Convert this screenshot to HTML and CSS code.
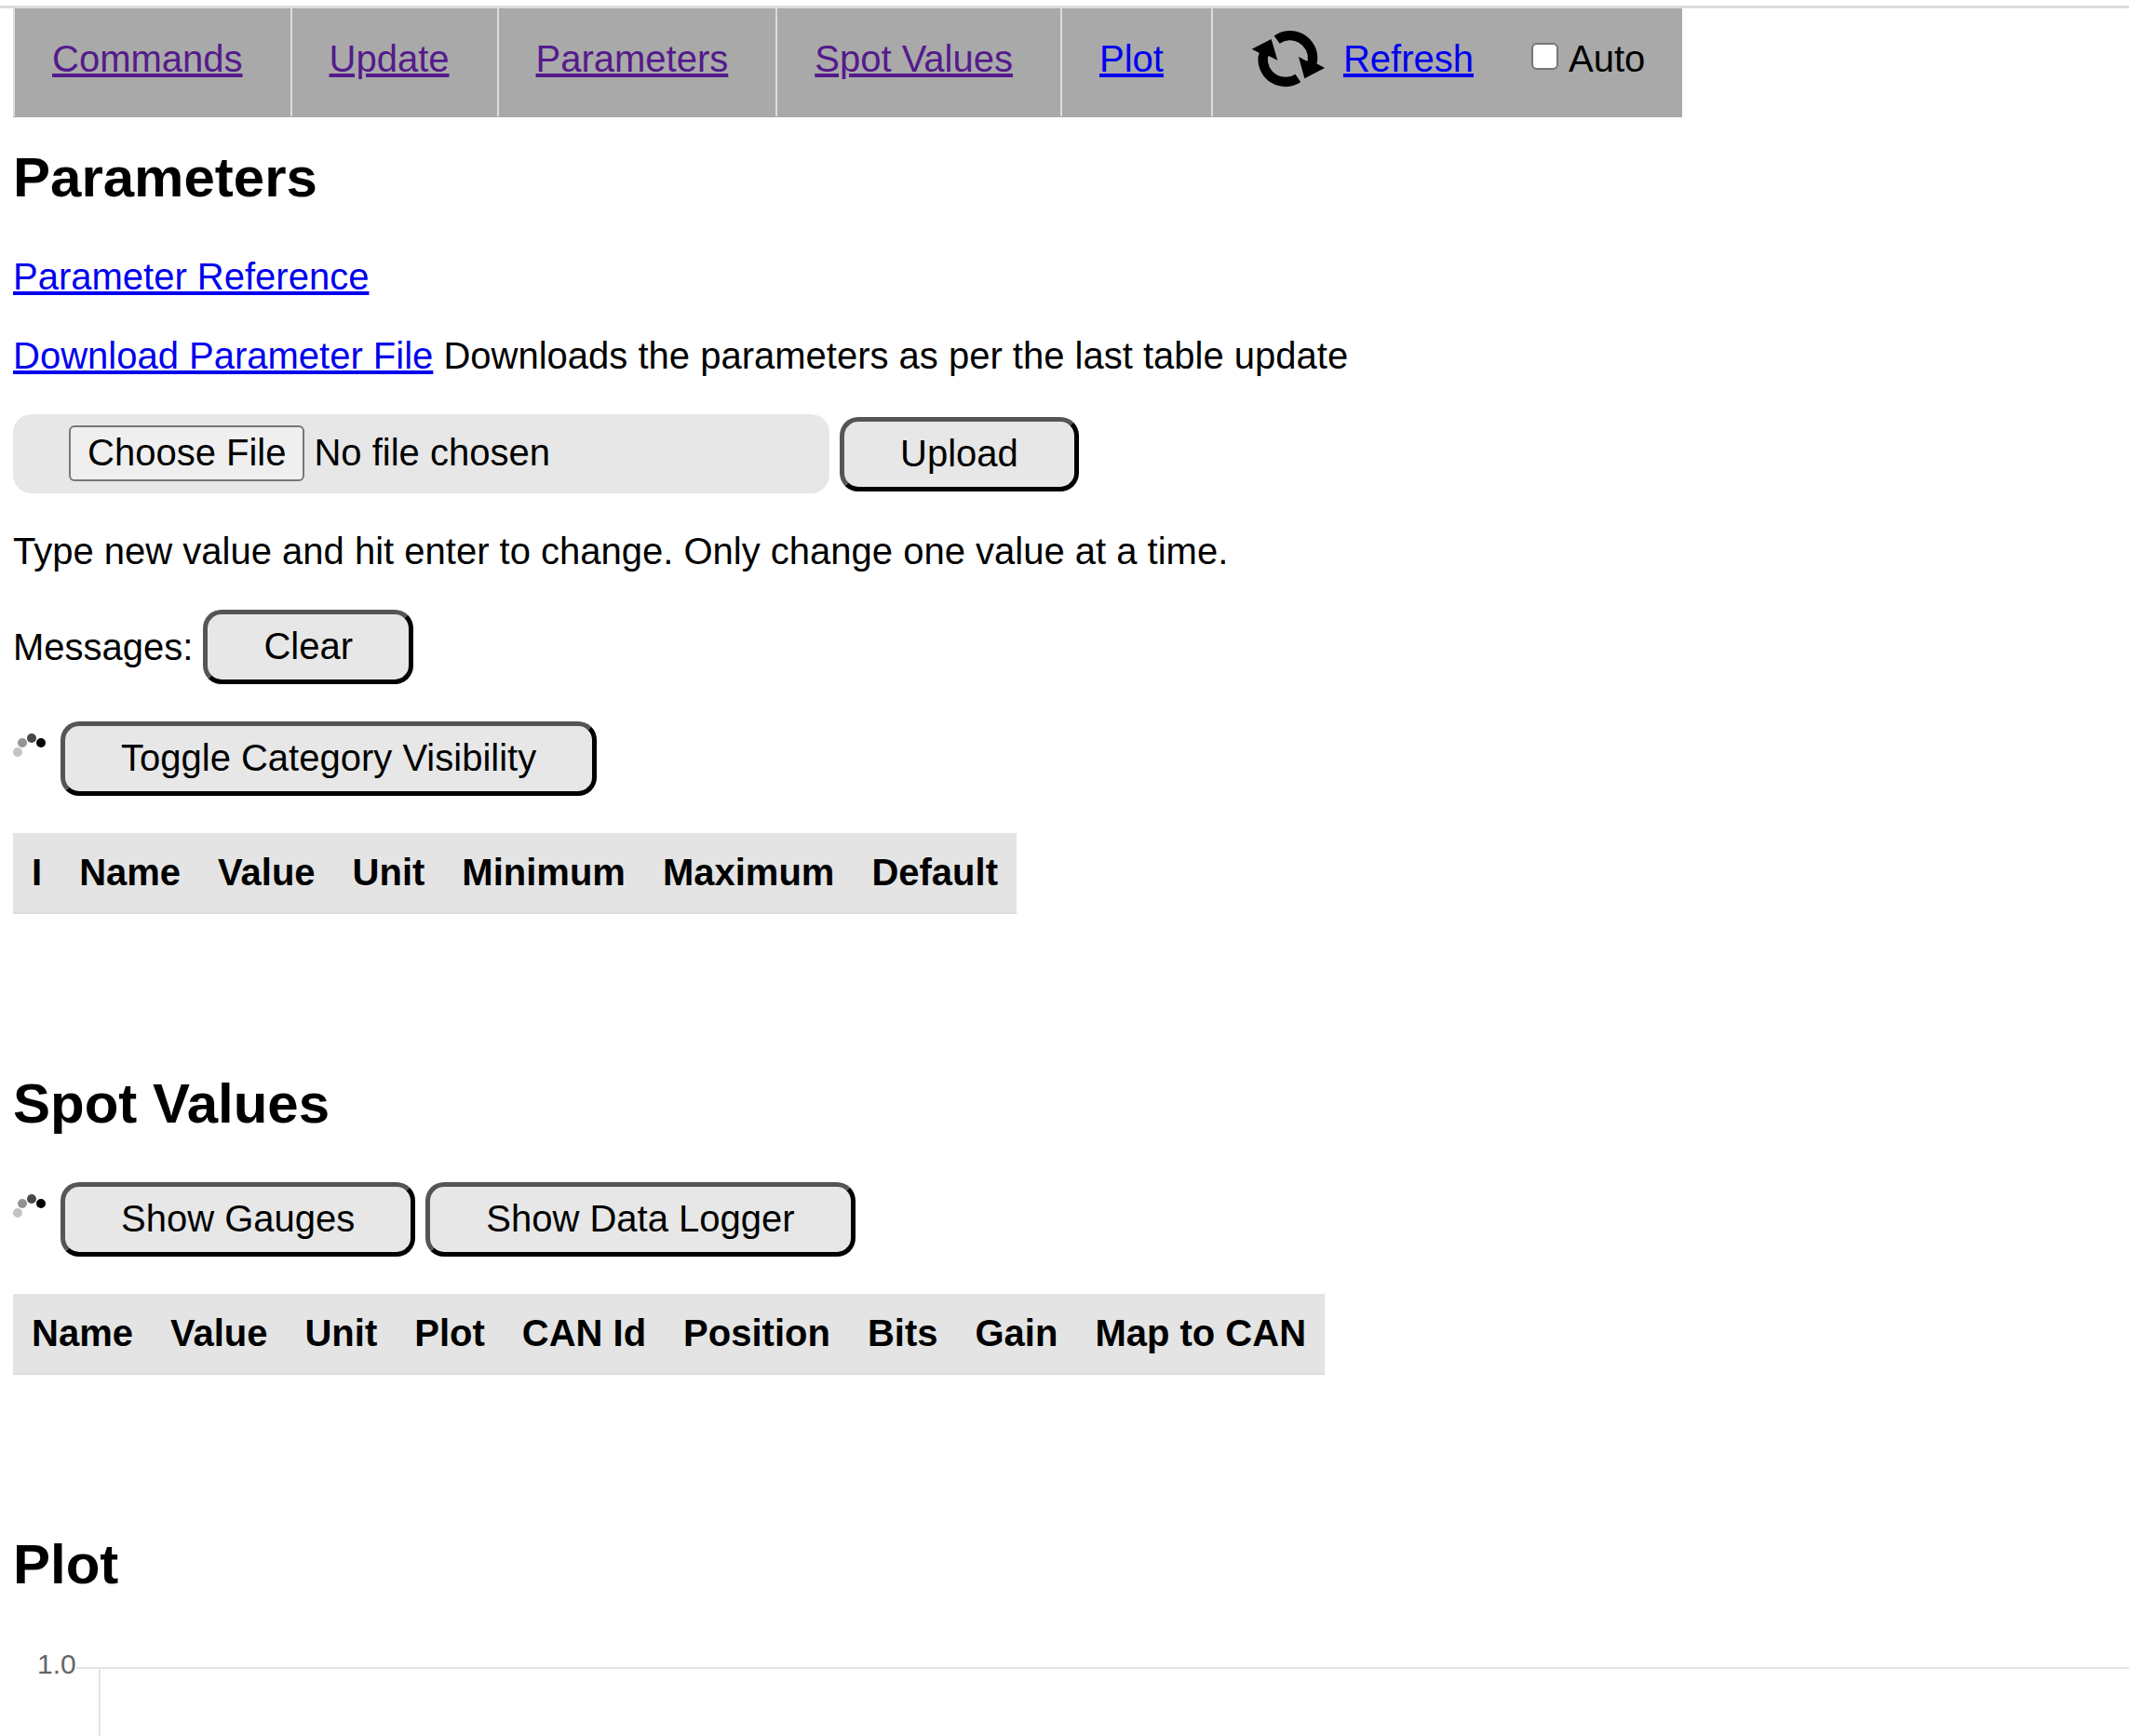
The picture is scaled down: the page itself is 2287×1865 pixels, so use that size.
FILE: index.html
```html
<!DOCTYPE html>
<html lang="en">
<head>
  <meta charset="UTF-8">
  <meta name="viewport" content="width=device-width, initial-scale=1.0">
  <title>Parameters</title>
  <link rel="stylesheet" href="styles.css">
</head>
<body>
  <div class="topline"></div>

  <div class="content">
    <ul class="navbar">
      <li><a class="visited" href="#commands">Commands</a></li>
      <li><a class="visited" href="#update">Update</a></li>
      <li><a class="visited" href="#parameters">Parameters</a></li>
      <li><a class="visited" href="#spotvalues">Spot Values</a></li>
      <li><a href="#plot">Plot</a></li>
      <li class="refresh">
        <svg class="refresh-icon" viewBox="0 0 252 192" aria-hidden="true">
          <g fill="none" stroke="#000" stroke-width="31">
            <path d="M86 35 A73 73 0 0 1 201 102 L196 118"/>
            <path d="M154 159 A73 73 0 0 1 41 92 L46 76"/>
          </g>
          <path d="M156 90 L186 106 L214 112 L240 126 L175 160 Z"/>
          <path d="M88 101 L58 86 L30 78 L5 65 L68 33 Z"/>
        </svg>
        <a href="#refresh">Refresh</a>
        <label class="auto" for="auto-refresh"><input type="checkbox" id="auto-refresh">Auto</label>
      </li>
    </ul>

    <h2 id="parameters">Parameters</h2>
    <p><a href="#reference">Parameter Reference</a></p>
    <p><a href="#download">Download Parameter File</a> Downloads the parameters as per the last table update</p>

    <form class="row upload">
      <input type="file" class="file" aria-label="Parameter file">
      <button type="button">Upload</button>
    </form>

    <p>Type new value and hit enter to change. Only change one value at a time.</p>

    <div class="row messages">
      <span>Messages:</span>
      <button type="button">Clear</button>
    </div>

    <div class="row">
      <svg class="spinner" viewBox="0 0 16 16" aria-hidden="true">
        <circle cx="2" cy="8" r="2" fill="#c4c4c4"/>
        <circle cx="4" cy="4" r="2" fill="#949494"/>
        <circle cx="8" cy="2" r="2" fill="#484848"/>
        <circle cx="12" cy="4" r="2" fill="#000"/>
      </svg>
      <button type="button">Toggle Category Visibility</button>
    </div>

    <table>
      <thead>
        <tr>
          <th>I</th>
          <th>Name</th>
          <th>Value</th>
          <th>Unit</th>
          <th>Minimum</th>
          <th>Maximum</th>
          <th>Default</th>
        </tr>
      </thead>
    </table>

    <h2 id="spotvalues">Spot Values</h2>
    <div class="row">
      <svg class="spinner" viewBox="0 0 16 16" aria-hidden="true">
        <circle cx="2" cy="8" r="2" fill="#c4c4c4"/>
        <circle cx="4" cy="4" r="2" fill="#949494"/>
        <circle cx="8" cy="2" r="2" fill="#484848"/>
        <circle cx="12" cy="4" r="2" fill="#000"/>
      </svg>
      <button type="button">Show Gauges</button>
      <button type="button">Show Data Logger</button>
    </div>

    <table>
      <thead>
        <tr>
          <th>Name</th>
          <th>Value</th>
          <th>Unit</th>
          <th>Plot</th>
          <th>CAN Id</th>
          <th>Position</th>
          <th>Bits</th>
          <th>Gain</th>
          <th>Map to CAN</th>
        </tr>
      </thead>
    </table>

    <h2 id="plot">Plot</h2>
    <div class="chart">
      <div class="chart-label">1.0</div>
      <div class="chart-tick"></div>
      <div class="chart-area"></div>
    </div>
  </div>
</body>
</html>
```
FILE: styles.css
```css
* {
  box-sizing: border-box;
}

body {
  display: flex;
  flex-direction: column;
  min-height: 100vh;
  margin: 0;
  font-family: Arial, "Liberation Sans", sans-serif;
  font-size: 40px;
  line-height: 45px;
  color: #000;
  background-color: #fff;
}

.topline {
  height: 9px;
  border-bottom: 3px solid #dadcdf;
}

.content {
  flex: 1;
  display: flex;
  flex-direction: column;
  align-items: flex-start;
  padding-left: 14px;
}

a {
  color: #0000ee;
}

a.visited {
  color: #551a8b;
}

/* navigation */
.navbar {
  display: flex;
  margin: 0 0 31px;
  padding: 0;
  list-style: none;
  background-color: #a9a9a9;
  border-bottom: 1px solid #a9a9a9;
}

.navbar li {
  padding: 32px 51px 39px 40px;
  border-left: 2px solid #dddddd;
}

.navbar .refresh {
  display: flex;
  align-items: center;
  padding: 0 40px 7px;
}

.refresh-icon {
  width: 84px;
  height: 64px;
  margin: 0 16px 2px 0;
}

.auto {
  display: flex;
  align-items: center;
  gap: 11px;
  margin-left: 62px;
}

.auto input {
  appearance: none;
  width: 29px;
  height: 29px;
  margin: 0 0 7px;
  border: 2px solid #767676;
  border-radius: 6px;
  background-color: #fff;
}

.auto input:checked {
  background-color: #0075ff;
}

h2 {
  margin: 0 0 50px;
  font-size: 60px;
  line-height: 68px;
}

p {
  margin: 0 0 40px;
}

.row {
  display: flex;
  align-items: baseline;
  gap: 11px;
  margin-bottom: 40px;
}

.upload,
.messages {
  align-items: center;
}

/* buttons */
button {
  padding: 12px 60px 13px;
  font: inherit;
  color: #000;
  background-color: #e7e7e7;
  border: 5px solid;
  border-color: #555 #000 #000 #555;
  border-radius: 20px;
  cursor: pointer;
}

.file {
  width: 877px;
  padding: 12px 60px 13px;
  font: inherit;
  background-color: #e7e7e7;
  border-radius: 20px;
}

.file::file-selector-button {
  margin-right: 10px;
  padding: 5px 18px 6px;
  font: inherit;
  color: #000;
  background-color: #efefef;
  border: 2px solid #767676;
  border-radius: 6px;
}

.spinner {
  width: 40px;
  height: 40px;
}

/* tables */
table {
  margin-bottom: 170px;
  border-collapse: separate;
  border-spacing: 0;
}

th {
  padding: 20px;
  text-align: left;
  background-color: #e4e4e4;
  border-bottom: 2px solid #ddd;
}

/* plot */
.chart {
  flex: 1;
  align-self: stretch;
  display: flex;
  min-height: 90px;
}

.chart-label {
  padding: 6px 0 0 26px;
  font-size: 30px;
  line-height: 34px;
  color: #666;
}

.chart-tick {
  width: 24px;
  height: 2px;
  margin-top: 26px;
  background-color: #e5e5e5;
}

.chart-area {
  flex: 1;
  margin-top: 26px;
  border-top: 2px solid #e5e5e5;
  border-left: 2px solid #e5e5e5;
}
```
